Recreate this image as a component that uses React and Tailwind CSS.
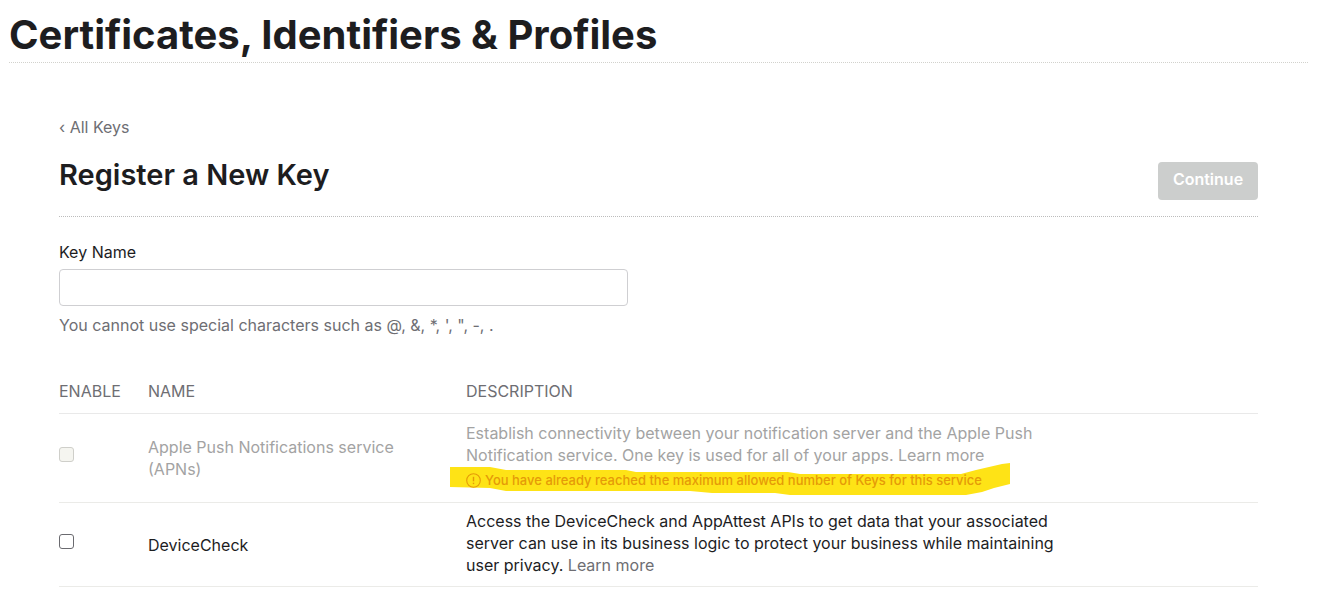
import React from "react";

function Checkbox({ id, disabled }) {
  return (
    <input
      id={id}
      type="checkbox"
      disabled={disabled}
      className="block size-[15px] appearance-none rounded-[3px] border border-[#6a6a6f] bg-white checked:bg-[#0070c9] disabled:border-[#cfcfca] disabled:bg-[#f5f5f0]"
    />
  );
}

function Highlight() {
  return (
    <svg
      aria-hidden="true"
      className="absolute -top-[7px] -left-4 h-[34px] w-[562px] max-w-none"
      viewBox="0 0 562 34"
    >
      <path
        d="M0 3 L40 3 L56 6 L176 6 L186 8 L300 8 L338 8 L350 10 L511 10 L526 6 L552 0 L560 -1 V20 L544 24 L532 28 L516 31 L340 31 L325 29 L262 29 L240 27 L56 27 L40 24 L0 23 Z"
        transform="translate(0 1)"
        fill="#fee316"
      />
    </svg>
  );
}

function LimitWarning() {
  return (
    <div className="relative mt-1">
      <Highlight />
      <p className="relative flex items-center gap-1 text-[13px] leading-5 font-medium text-[#e59a08]">
        <svg
          aria-hidden="true"
          className="size-[15px] shrink-0"
          viewBox="0 0 15 15"
          fill="none"
          stroke="currentColor"
        >
          <circle cx="7.5" cy="7.5" r="6.8" strokeWidth="1.1" />
          <path d="M7.5 3.8V8.3" strokeWidth="1.4" />
          <path d="M7.5 9.7V11.1" strokeWidth="1.4" />
        </svg>
        You have already reached the maximum allowed number of Keys for this service
      </p>
    </div>
  );
}

export default function App() {
  return (
    <div className="bg-white pr-3 pl-[9px] font-['Inter',sans-serif] text-base text-[#1d1d1f]">
      <header className="border-b border-dotted border-[#d2d2cd] pt-2 pb-px">
        <h1 className="text-[40px] leading-[53px] font-bold">
          Certificates, Identifiers &amp; Profiles
        </h1>
      </header>

      <main className="mr-[50px] ml-[50px] pt-[53px]">
        <a href="#keys" className="block text-base leading-[22px] text-[#6e6e73]">
          ‹ All Keys
        </a>

        <div className="flex items-start justify-between border-b border-dotted border-[#bcbcbc] pt-[18px] pb-4">
          <h2 className="text-[29px] leading-[38px] font-semibold">Register a New Key</h2>
          <button
            type="button"
            disabled
            className="mt-1.5 h-[38px] w-[100px] rounded bg-[#cccecd] pb-1 text-base font-semibold text-white"
          >
            Continue
          </button>
        </div>

        <form>
          <label htmlFor="key-name" className="block pt-6 leading-[22px]">
            Key Name
          </label>
          <input
            id="key-name"
            type="text"
            className="mt-1.5 block h-[37px] w-[569px] max-w-full rounded border border-[#cfcfd2] px-3 outline-none"
          />
          <p className="mt-2 leading-[22px] text-[#6e6e73]">
            You cannot use special characters such as @, &amp;, *, ', ", -, .
          </p>

          <table className="mt-11 w-full table-fixed border-collapse text-left">
            <thead>
              <tr className="border-b border-[#e9e9e9] text-[#6e6e73]">
                <th className="w-[89px] pb-[11px] leading-[22px] font-normal">ENABLE</th>
                <th className="w-[318px] pb-[11px] leading-[22px] font-normal">NAME</th>
                <th className="pb-[11px] leading-[22px] font-normal">DESCRIPTION</th>
              </tr>
            </thead>
            <tbody>
              <tr className="border-b border-[#ebebe8] text-[#a3a3a3]">
                <td className="pb-2">
                  <Checkbox id="apns" disabled />
                </td>
                <td className="pr-12 leading-[22px]">
                  <label htmlFor="apns">Apple Push Notifications service (APNs)</label>
                </td>
                <td className="pt-2 pb-3">
                  <p className="max-w-[600px] leading-[22px]">
                    Establish connectivity between your notification server and the Apple Push
                    Notification service. One key is used for all of your apps.{" "}
                    <a href="#apns">Learn more</a>
                  </p>
                  <LimitWarning />
                </td>
              </tr>
              <tr className="border-b border-[#ebebe8]">
                <td className="pb-1.5">
                  <Checkbox id="devicecheck" />
                </td>
                <td className="leading-[22px]">
                  <label htmlFor="devicecheck">DeviceCheck</label>
                </td>
                <td className="pt-[7px] pb-2.5">
                  <p className="max-w-[600px] leading-[22px]">
                    Access the DeviceCheck and AppAttest APIs to get data that your associated
                    server can use in its business logic to protect your business while maintaining
                    user privacy.{" "}
                    <a href="#devicecheck" className="text-[#6e6e73]">
                      Learn more
                    </a>
                  </p>
                </td>
              </tr>
            </tbody>
          </table>
        </form>
      </main>
    </div>
  );
}
